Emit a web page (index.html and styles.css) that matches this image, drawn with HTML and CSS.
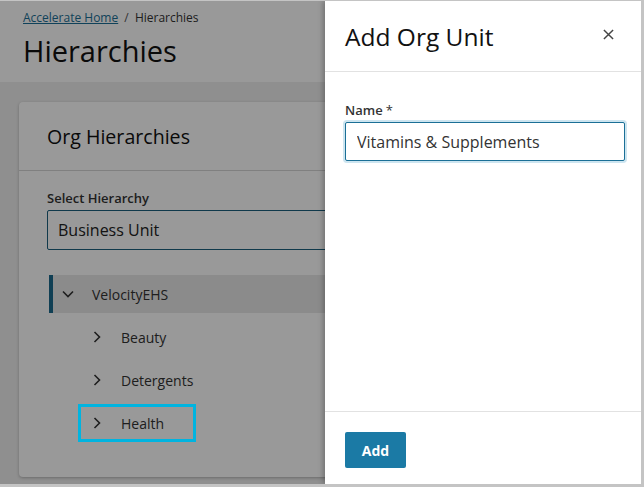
FILE: index.html
```html
<!DOCTYPE html>
<html lang="en">
<head>
    <meta charset="UTF-8">
    <meta name="viewport" content="width=device-width, initial-scale=1.0">
    <title>Hierarchies</title>
    <link rel="stylesheet" href="styles.css">
</head>
<body>

<div class="frame">
    <div class="page">
        <header class="page-header">
            <nav class="breadcrumb">
                <a href="#">Accelerate Home</a>
                <span class="sep">/</span>
                <span>Hierarchies</span>
            </nav>
            <h1>Hierarchies</h1>
        </header>

        <main class="content">
            <section class="card">
                <div class="card-header">
                    <h2>Org Hierarchies</h2>
                </div>
                <div class="card-body">
                    <label class="field-label">Select Hierarchy</label>
                    <div class="select">Business Unit</div>

                    <ul class="tree">
                        <li class="tree-row parent">
                            <svg class="chev" viewBox="0 0 14 14"><path d="M2 4.5l5 5 5-5"/></svg>
                            <span>VelocityEHS</span>
                        </li>
                        <li class="tree-row child">
                            <svg class="chev" viewBox="0 0 14 14"><path d="M4.5 2l5 5-5 5"/></svg>
                            <span>Beauty</span>
                        </li>
                        <li class="tree-row child">
                            <svg class="chev" viewBox="0 0 14 14"><path d="M4.5 2l5 5-5 5"/></svg>
                            <span>Detergents</span>
                        </li>
                        <li class="tree-row child marked">
                            <svg class="chev" viewBox="0 0 14 14"><path d="M4.5 2l5 5-5 5"/></svg>
                            <span>Health</span>
                        </li>
                    </ul>
                </div>
            </section>
        </main>

        <div class="overlay"></div>
    </div>

    <aside class="drawer">
        <div class="drawer-header">
            <h2>Add Org Unit</h2>
            <button class="close" aria-label="Close">
                <svg viewBox="0 0 12 12"><path d="M1 1l10 10M11 1L1 11"/></svg>
            </button>
        </div>
        <div class="drawer-body">
            <label class="field-label">Name<span class="req">*</span></label>
            <input class="text-input" type="text" value="Vitamins &amp; Supplements">
        </div>
        <div class="drawer-footer">
            <button class="btn-primary">Add</button>
        </div>
    </aside>
</div>

</body>
</html>
```

FILE: styles.css
```css
*, *::before, *::after {
    box-sizing: border-box;
}
body {
    margin: 0;
    font-family: "Open Sans", "DejaVu Sans", sans-serif;
    color: #222;
}
.frame {
    position: relative;
    width: 644px;
    height: 487px;
    border-top: 1px solid #c4c4c4;
    border-right: 3px solid #c4c4c4;
    border-bottom: 3px solid #c4c4c4;
    overflow: hidden;
}
.page {
    position: relative;
    height: 100%;
    background: #eeeeee;
    display: flex;
    flex-direction: column;
}
.page-header {
    background: #fff;
    height: 81px;
    padding: 8px 23px 0;
}
.breadcrumb {
    font-size: 12px;
    color: #333;
    line-height: 18px;
}
.breadcrumb a {
    color: #1b6f96;
}
.breadcrumb .sep {
    margin: 0 3px;
    color: #555;
}
h1 {
    margin: 5px 0 0;
    font-size: 29px;
    font-weight: 400;
    line-height: 38px;
    color: #111;
}
.content {
    flex: 1;
    padding: 20px 0 7px 19px;
    display: flex;
}
.card {
    flex: 1;
    background: #fff;
    border-radius: 4px;
    box-shadow: 0 1px 3px rgba(0, 0, 0, 0.25);
}
.card-header {
    height: 69px;
    padding: 0 28px;
    display: flex;
    align-items: center;
    border-bottom: 1px solid #d6d6d6;
}
.card-header h2 {
    margin: 0;
    font-size: 19.6px;
    font-weight: 400;
    color: #111;
}
.card-body {
    padding: 18px 28px;
}
.field-label {
    display: block;
    font-size: 13px;
    font-weight: 600;
    color: #333;
    line-height: 18px;
    margin-bottom: 3px;
}
.select {
    height: 40px;
    border: 1px solid #1b5f7e;
    border-radius: 2px;
    padding: 0 10px;
    font-size: 16px;
    line-height: 38px;
    color: #222;
}
.tree {
    list-style: none;
    margin: 25px 0 0 2px;
    padding: 0;
    display: flex;
    flex-direction: column;
    gap: 5px;
}
.tree-row {
    position: relative;
    height: 38px;
    display: flex;
    align-items: center;
    font-size: 14px;
    color: #333;
}
.tree-row .chev {
    width: 14px;
    height: 14px;
    fill: none;
    stroke: #333;
    stroke-width: 1.6;
    margin-right: 17px;
}
.tree-row.parent {
    background: #e8e8e8;
    border-left: 4px solid #1b6a8c;
    padding-left: 8px;
}
.tree-row.child {
    padding-left: 41px;
    width: 146px;
}
.tree-row.marked::after {
    content: "";
    position: absolute;
    left: 29px;
    top: 0;
    width: 118px;
    height: 38px;
    border: 3px solid #00b4e0;
    z-index: 2;
}
.overlay {
    position: absolute;
    inset: 0;
    background: rgba(0, 0, 0, 0.4);
    z-index: 1;
}
.drawer {
    position: absolute;
    top: 0;
    right: 0;
    bottom: 0;
    width: 316px;
    background: #fff;
    z-index: 3;
    box-shadow: -2px 0 5px rgba(0, 0, 0, 0.25);
    display: flex;
    flex-direction: column;
}
.drawer-header {
    height: 71px;
    padding: 0 20px;
    display: flex;
    align-items: center;
    justify-content: space-between;
    border-bottom: 1px solid #e2e2e2;
}
.drawer-header h2 {
    margin: 0;
    font-size: 24.5px;
    font-weight: 400;
    color: #111;
}
.close {
    border: 0;
    background: none;
    padding: 0;
    width: 12px;
    height: 12px;
    margin-right: 6px;
    margin-top: -2px;
    display: flex;
}
.close svg {
    width: 11px;
    height: 11px;
    fill: none;
    stroke: #444;
    stroke-width: 1.6;
}
.drawer-body {
    flex: 1;
    padding: 29px 19px 0 20px;
}
.req {
    margin-left: 3px;
    font-weight: 400;
}
.text-input {
    width: 280px;
    height: 39px;
    border: 1px solid #1b6f96;
    border-radius: 2px;
    box-shadow: 0 0 0 2px #cde5f0;
    padding: 0 11px;
    font-family: inherit;
    font-size: 16px;
    color: #333;
    outline: none;
}
.drawer-footer {
    height: 73px;
    border-top: 1px solid #e2e2e2;
    padding: 20px 20px 0;
}
.btn-primary {
    width: 61px;
    height: 36px;
    background: #1b7aa5;
    color: #fff;
    border: 0;
    border-radius: 2px;
    font-family: inherit;
    font-size: 14px;
    font-weight: 700;
}
```
